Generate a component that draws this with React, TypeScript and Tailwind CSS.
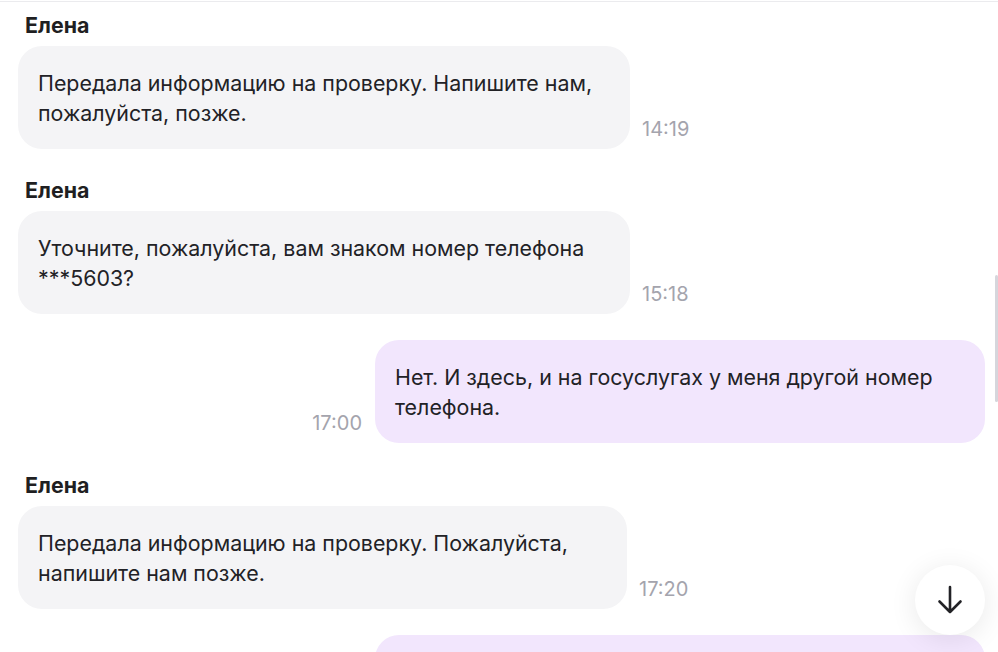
type Msg = {
  id: number;
  out?: boolean;
  author?: string;
  lines: string[];
  time: string;
  width: string;
  gap: string;
};

const messages: Msg[] = [
  {
    id: 1,
    author: "Елена",
    lines: ["Передала информацию на проверку. Напишите нам,", "пожалуйста, позже."],
    time: "14:19",
    width: "w-[612px]",
    gap: "mt-[11px]",
  },
  {
    id: 2,
    author: "Елена",
    lines: ["Уточните, пожалуйста, вам знаком номер телефона", "***5603?"],
    time: "15:18",
    width: "w-[612px]",
    gap: "mt-[29px]",
  },
  {
    id: 3,
    out: true,
    lines: ["Нет. И здесь, и на госуслугах у меня другой номер", "телефона."],
    time: "17:00",
    width: "w-[610px]",
    gap: "mt-[26px]",
  },
  {
    id: 4,
    author: "Елена",
    lines: ["Передала информацию на проверку. Пожалуйста,", "напишите нам позже."],
    time: "17:20",
    width: "w-[609px]",
    gap: "mt-[30px]",
  },
  {
    id: 5,
    out: true,
    lines: ["", ""],
    time: "",
    width: "w-[610px]",
    gap: "mt-[26px]",
  },
];

const Bubble = ({ msg }: { msg: Msg }) => (
  <div
    className={`${msg.width} shrink-0 rounded-[24px] pl-5 pr-5 pt-[22px] pb-[21px] text-[21.4px] leading-[30px] text-[#222226] ${
      msg.out ? "bg-[#f2e6fd]" : "bg-[#f4f4f6]"
    }`}
  >
    {msg.lines.map((line, i) => (
      <div key={i} className="h-[30px] whitespace-nowrap">
        {line}
      </div>
    ))}
  </div>
);

const Time = ({ value }: { value: string }) => (
  <div className="self-end mb-[10px] text-[20px] leading-5 text-[#a4a4ad]">
    {value}
  </div>
);

export default function App() {
  return (
    <div className="relative w-[998px] h-[652px] overflow-hidden bg-white font-['Inter','Roboto',sans-serif]">
      <div className="mt-px h-px bg-[#ebebee]" />

      <div className="flex flex-col pl-[18px] pr-[13px]">
        {messages.map((msg) =>
          msg.out ? (
            <div key={msg.id} className={`${msg.gap} flex justify-end gap-[13px]`}>
              {msg.time && <Time value={msg.time} />}
              <Bubble msg={msg} />
            </div>
          ) : (
            <div key={msg.id} className={`${msg.gap} flex flex-col`}>
              <div className="pl-[7px] text-[21.4px] leading-6 font-bold text-[#1f1f22]">
                {msg.author}
              </div>
              <div className="mt-[9px] flex gap-3">
                <Bubble msg={msg} />
                <Time value={msg.time} />
              </div>
            </div>
          )
        )}
      </div>

      {/* скроллбар */}
      <div className="absolute right-0 top-[275px] h-[127px] w-[3px] rounded-full bg-[#d6d6dc]" />

      {/* кнопка вниз */}
      <button className="absolute left-[915px] top-[565px] flex h-[70px] w-[70px] items-center justify-center rounded-full bg-white shadow-[0_4px_28px_rgba(0,0,0,0.09)]">
        <svg width="26" height="30" viewBox="0 0 26 30" fill="none">
          <path
            d="M13 2V27M2.5 16.5L13 27L23.5 16.5"
            stroke="#222226"
            strokeWidth="2.6"
            strokeLinecap="round"
            strokeLinejoin="round"
          />
        </svg>
      </button>
    </div>
  );
}
